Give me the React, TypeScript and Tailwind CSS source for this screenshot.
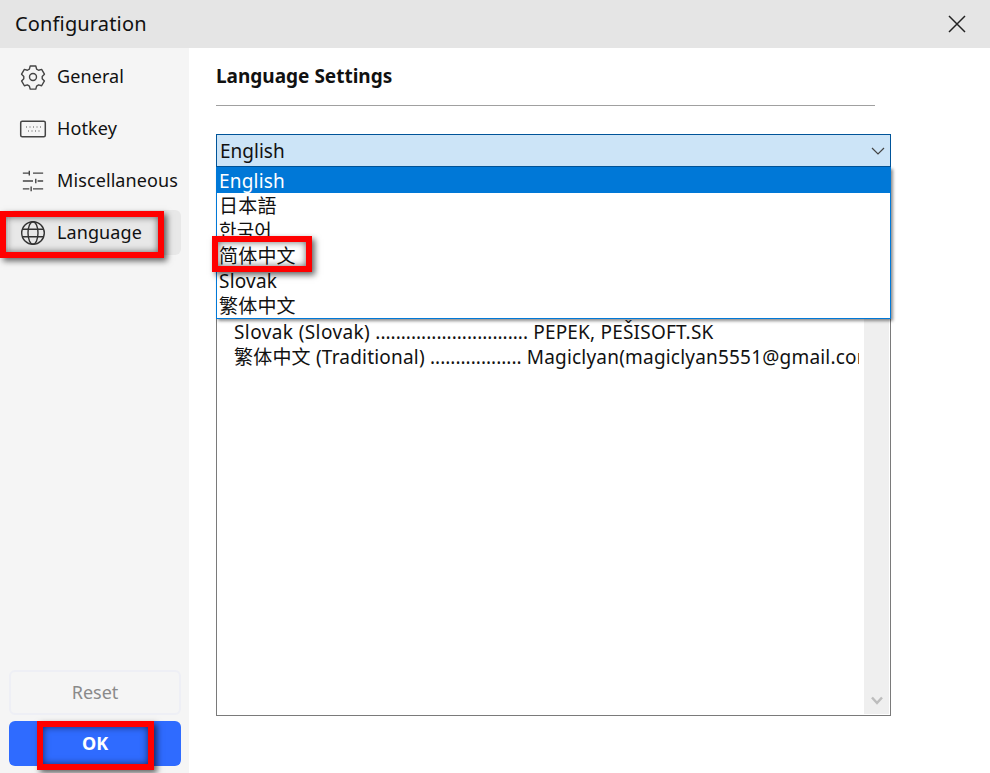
import React from "react";

const font = { fontFamily: '"Noto Sans","Noto Sans CJK SC",sans-serif' };

function Gear() {
  return (
    <svg width="28" height="28" viewBox="0 0 24 24" fill="none" stroke="#444" strokeWidth="1.2" strokeLinejoin="round">
      <path d="M9.6 2.6h4.8l.7 2.6 1.7 1 2.6-.7 2.4 4.1-1.9 1.9v2l1.9 1.9-2.4 4.1-2.6-.7-1.7 1-.7 2.6H9.6l-.7-2.6-1.7-1-2.6.7-2.4-4.1 1.9-1.9v-2L2.2 9.6l2.4-4.1 2.6.7 1.7-1z" />
      <circle cx="12" cy="12" r="3" />
    </svg>
  );
}
function Keyboard() {
  return (
    <svg width="28" height="20" viewBox="0 0 28 20" fill="none" stroke="#444" strokeWidth="1.5">
      <rect x="1.7" y="2.2" width="24.6" height="15.6" rx="1.5" />
      <path d="M7 8h1M10.5 8h1M14 8h1M17.5 8h1M21 8h1M9 12h1M12.5 12h1M16 12h1M19.5 12h1" stroke="#888" />
    </svg>
  );
}
function Sliders() {
  return (
    <svg width="24" height="24" viewBox="0 0 26 26" fill="none" stroke="#444" strokeWidth="1.5">
      <path d="M2 4.5h7M13 4.5h11M9 2v5M2 13h11M18 13h6M16 10.5v5M2 21.5h7M13 21.5h11M11 19v5" />
    </svg>
  );
}
function Globe() {
  return (
    <svg width="26" height="26" viewBox="0 0 26 26" fill="none" stroke="#333" strokeWidth="1.4">
      <circle cx="13" cy="13" r="11.3" />
      <ellipse cx="13" cy="13" rx="5" ry="11.3" />
      <path d="M2.5 9.2h21M2.5 16.8h21" />
    </svg>
  );
}

function NavItem({ icon, label, active }: { icon: React.ReactNode; label: string; active?: boolean }) {
  return (
    <div className={`flex h-[45px] items-center rounded-md ${active ? "bg-[#e8e8e8]" : ""}`}>
      <span className="flex w-[48px] shrink-0 items-center justify-center">{icon}</span>
      <span className="whitespace-nowrap text-[18px] tracking-[0.1px] text-[#111]">{label}</span>
    </div>
  );
}

const RED = "pointer-events-none absolute border-[6px] border-[#ff0000] shadow-[3px_3px_6px_rgba(0,0,0,0.6),inset_0_0_7px_rgba(0,0,0,0.6)]";

export default function App() {
  const options = ["日本語", "한국어", "简体中文", "Slovak", "繁体中文"];
  return (
    <div className="relative flex h-[773px] w-[990px] flex-col overflow-hidden bg-white" style={font}>
      <header className="flex h-12 shrink-0 items-center justify-between bg-[#e5e5e5] pl-[15px] pr-[23px]">
        <span className="text-[20px] tracking-[0.15px] text-[#111]">Configuration</span>
        <svg width="20" height="20" viewBox="0 0 20 20" fill="none" stroke="#222" strokeWidth="1.5">
          <path d="M2 2l16 16M18 2L2 18" />
        </svg>
      </header>
      <div className="flex min-h-0 flex-1">
        <aside className="flex w-[189px] shrink-0 flex-col justify-between bg-[#f5f5f5] pb-[7px] pl-[9px] pr-2 pt-[6px]">
          <nav className="flex flex-col gap-[7px]">
            <NavItem icon={<Gear />} label="General" />
            <NavItem icon={<Keyboard />} label="Hotkey" />
            <NavItem icon={<Sliders />} label="Miscellaneous" />
            <NavItem icon={<Globe />} label="Language" active />
          </nav>
          <div className="flex flex-col gap-[6px]">
            <div className="flex h-[45px] items-center justify-center rounded-md border-2 border-[#eeeff5] text-[18px] text-[#8a8a8a]">Reset</div>
            <div className="flex h-[45px] items-center justify-center rounded-md bg-[#2f6bff] text-[18px] font-bold text-white">OK</div>
          </div>
        </aside>
        <main className="relative flex-1 pl-[27px] pr-[99px] pt-[15px]">
          <h1 className="text-[19px] font-bold leading-[26px] text-[#111]">Language Settings</h1>
          <div className="mt-[16px] h-px w-[659px] bg-[#a0a0a0]" />
          <div className="relative mt-[28px] flex h-[582px] w-[675px] flex-col border border-[#7a7a7a]">
            <div className="absolute -left-px -right-px -top-px z-10 flex h-[33px] items-center justify-between border border-[#005499] bg-[#cce4f7] pl-[3px] pr-[5px] pt-[1px] text-[19px] text-[#111]">
              <span>English</span>
              <svg width="14" height="8" viewBox="0 0 14 8" fill="none" stroke="#444" strokeWidth="1.2">
                <path d="M1 1l6 6 6-6" />
              </svg>
            </div>
            <div className="flex h-full">
              <div className="min-w-0 flex-1 pr-[5px] pt-[185px]">
                <div className="overflow-hidden pl-[17px] text-[19px] leading-[25px] tracking-[0.2px] text-[#111]">
                  <div className="whitespace-nowrap"><span className="tracking-[0.4px]">Slovak (Slovak)</span> <span className="tracking-normal">..............................</span> PEPEK, PEŠISOFT.SK</div>
                  <div className="whitespace-nowrap">繁体中文 (Traditional) <span className="tracking-normal">..................</span> Magiclyan(magiclyan5551@gmail.com</div>
                </div>
              </div>
              <div className="mb-[1px] mr-[1px] flex w-[25px] shrink-0 items-end justify-center bg-[#efefef] pb-[8px]">
                <svg width="14" height="10" viewBox="0 0 14 10" fill="none" stroke="#bdbdbd" strokeWidth="2.5">
                  <path d="M2 1.5l5 5.5 5-5.5" />
                </svg>
              </div>
            </div>
            <div className="absolute -left-px -right-px top-[32px] z-20 border border-[#0078d7] bg-white text-[19px] leading-[25px] tracking-[0.2px] text-[#111] shadow-[2px_2px_3px_rgba(0,0,0,0.45)]">
              <div className="h-[25px] bg-[#0078d7] pl-[2px] pt-[1px] text-white">English</div>
              {options.map((o) => (
                <div key={o} className="h-[25px] pl-[2px] pt-[1px]">{o}</div>
              ))}
            </div>
            <div className={`${RED} left-[-5px] top-[101px] z-30 h-[36px] w-[100px]`} />
          </div>
        </main>
      </div>
      <div className={`${RED} left-0 top-[211px] h-[47px] w-[164px]`} />
      <div className={`${RED} left-[37px] top-[721px] h-[49px] w-[117px]`} />
    </div>
  );
}
